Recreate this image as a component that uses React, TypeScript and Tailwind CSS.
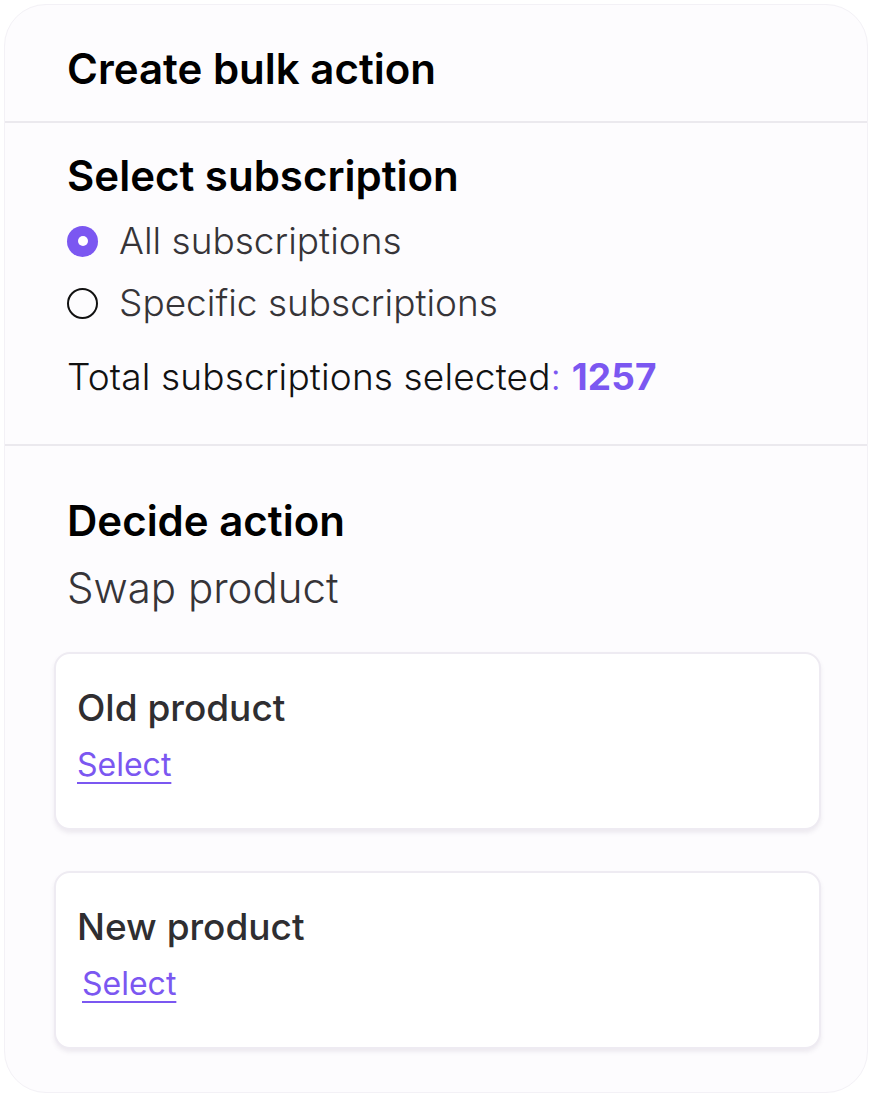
import React from "react";

const font = { fontFamily: "Inter, 'Noto Sans', sans-serif" };

function Radio({ checked, label }: { checked: boolean; label: string }) {
  return (
    <div className="flex items-center gap-[21px] h-[62px]">
      {checked ? (
        <span className="w-[31px] h-[31px] rounded-full bg-[#7b57f1] flex items-center justify-center">
          <span className="w-[10px] h-[10px] rounded-full bg-white" />
        </span>
      ) : (
        <span className="w-[31px] h-[31px] rounded-full border-[2.5px] border-[#111]" />
      )}
      <span className="text-[37px] font-light text-[#363438] leading-[44px]">{label}</span>
    </div>
  );
}

function ProductCard({ title, linkOffset }: { title: string; linkOffset: string }) {
  return (
    <div className="ml-[49px] w-[767px] h-[178px] rounded-[16px] border-2 border-[#eeebf2] bg-white shadow-[0_3px_4px_rgba(120,110,140,0.12)] pl-[21px] pt-[30px]">
      <div className="text-[37px] font-medium text-[#2f2e31] leading-[48px]">{title}</div>
      <div className={`mt-[11px] leading-[44px] ${linkOffset}`}>
        <span className="text-[32px] text-[#7b57f1] underline decoration-[2px] underline-offset-[6px] leading-[44px]">
          Select
        </span>
      </div>
    </div>
  );
}

export default function App() {
  return (
    <div style={font} className="w-[872px] h-[1097px] bg-white p-[4px]">
      <div className="h-[1089px] rounded-[42px] border border-[#f3f1f6] bg-[#fdfcfe] overflow-hidden">
        <div className="h-[118px] pl-[62px] pt-[39px] border-b-2 border-[#ebe9ee]">
          <h1 className="text-[42px] font-semibold text-black leading-[50px]">
            Create bulk action
          </h1>
        </div>
        <div className="h-[323px] pl-[62px] pt-[28px] border-b-2 border-[#ebe9ee]">
          <h2 className="text-[42px] font-semibold text-black leading-[50px]">
            Select subscription
          </h2>
          <div className="mt-[9px]">
            <Radio checked label="All subscriptions" />
            <Radio checked={false} label="Specific subscriptions" />
          </div>
          <div className="mt-[21px] text-[37px] font-light text-[#111] leading-[44px] tracking-[0.15px]">
            Total subscriptions selected<span className="text-[#7b57f1]">: </span>
            <span className="text-[#7b57f1] font-bold">1257</span>
          </div>
        </div>
        <div className="pl-[62px] pt-[50px]">
          <h2 className="text-[42px] font-semibold text-black leading-[50px]">
            Decide action
          </h2>
          <div className="mt-[17px] text-[42px] font-light text-[#363438] leading-[50px]">Swap product</div>
        </div>
        <div className="mt-[39px] flex flex-col gap-[41px]">
          <ProductCard title="Old product" linkOffset="" />
          <ProductCard title="New product" linkOffset="pl-[5px]" />
        </div>
      </div>
    </div>
  );
}
